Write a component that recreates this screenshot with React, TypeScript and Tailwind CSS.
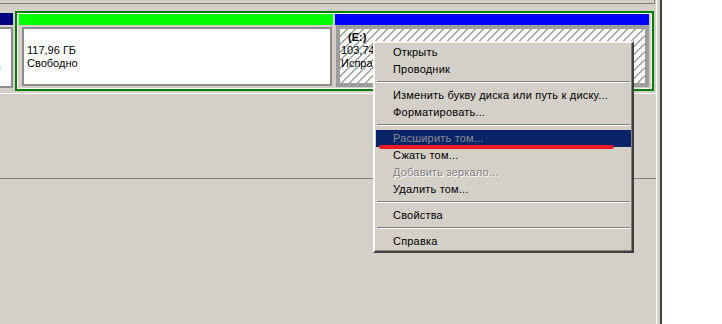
const font = { fontFamily: '"Liberation Sans", Arial, sans-serif' };

const hatch =
  "bg-[repeating-linear-gradient(135deg,#ffffff_0px,#ffffff_4.8px,#a4a4a4_4.8px,#a4a4a4_5.66px)]";

type Item = { label?: string; sep?: boolean; disabled?: boolean; active?: boolean };

const items: Item[] = [
  { label: "Открыть" },
  { label: "Проводник" },
  { sep: true },
  { label: "Изменить букву диска или путь к диску..." },
  { label: "Форматировать..." },
  { sep: true },
  { label: "Расширить том...", disabled: true, active: true },
  { label: "Сжать том..." },
  { label: "Добавить зеркало...", disabled: true },
  { label: "Удалить том..." },
  { sep: true },
  { label: "Свойства" },
  { sep: true },
  { label: "Справка" },
];

function ContextMenu() {
  return (
    <div className="absolute left-[373px] top-[41px] w-[261px] border-2 border-t-white border-l-white border-r-[#404040] border-b-[#404040] bg-[#d4d0c8] p-px shadow-[inset_-1px_-1px_0_#808080]">
      {items.map((it, i) =>
        it.sep ? (
          <div key={i} className="h-[9px] pt-[3px] px-px">
            <div className="h-px bg-[#808080]" />
            <div className="h-px bg-white" />
          </div>
        ) : (
          <div
            key={i}
            className={`h-[17px] pl-[17px] text-[11px] leading-[17px] tracking-[0.2px] whitespace-nowrap ${
              it.active
                ? "bg-[#0a246a] text-[#8c8c8c]"
                : it.disabled
                ? "text-[#808080] [text-shadow:1px_1px_0_#fff]"
                : "text-black"
            }`}
          >
            {it.label}
          </div>
        )
      )}
    </div>
  );
}

export default function App() {
  return (
    <div className="relative w-[722px] h-[324px] overflow-hidden bg-[#d4d0c8] flex" style={font}>
      {/* main pane */}
      <div className="w-[656px] flex flex-col">
        <div className="h-[4px] w-[655px] border-b border-r border-[#808080]" />
        <div className="mt-[7px] flex h-[80px]">
          {/* partially visible disk on the left */}
          <div className="w-[13px] flex flex-col pt-[2px]">
            <div className="h-[12px] bg-[#000080]" />
            <div className="mt-[2px] h-[61px] bg-white border-y-2 border-r-2 border-[#8c8c8c] text-[11px] leading-[13px] pt-[3px] overflow-hidden">
              <div className="h-[13px]" />
              <div className="h-[13px]" />
              <div className="-ml-[2px]">,</div>
            </div>
          </div>
          <div className="w-[2px]" />
          {/* extended partition */}
          <div className="w-[639px] border-2 border-[#008000]">
            <div className="h-full border border-white flex gap-[2px] pl-px">
              {/* free space */}
              <div className="w-[314px] flex flex-col">
                <div className="h-[11px] bg-[#00ff00]" />
                <div className="mt-[2px] ml-[3px] w-[310px] h-[59px] bg-white border-2 border-[#8c8c8c] pt-[2px] pl-[3px] text-[11px] leading-[13px] text-black">
                  <div className="h-[13px]" />
                  <div>117,96 ГБ</div>
                  <div>Свободно</div>
                </div>
              </div>
              {/* logical drive E: (selected) */}
              <div className="w-[314px] flex flex-col">
                <div className="h-[11px] bg-[#0000ff]" />
                <div className={`ml-px w-[313px] h-[62px] border-4 border-[#9c9c9c] ${hatch} pt-[2px] pl-px text-[11px] leading-[13px] text-black whitespace-nowrap`}>
                  <div className="w-[32px] overflow-hidden">
                    <div className="pl-[7px] font-bold">(E:)</div>
                    <div>103,74 ГБ NTFS</div>
                    <div>Исправен (Логический диск)</div>
                  </div>
                </div>
              </div>
            </div>
          </div>
        </div>
        <div className="mt-[2px] h-px bg-white" />
        <div className="h-[84px]" />
        <div className="h-px bg-[#808080]" />
      </div>
      {/* splitter */}
      <div className="w-px bg-white" />
      <div className="w-[3px]" />
      <div className="w-[2px] bg-[#404040]" />
      <div className="flex-1 bg-white" />

      <ContextMenu />
      <div className="absolute left-[379px] top-[145px] w-[235px] h-[4px] rounded-full bg-[#ed1c24]" />
    </div>
  );
}
